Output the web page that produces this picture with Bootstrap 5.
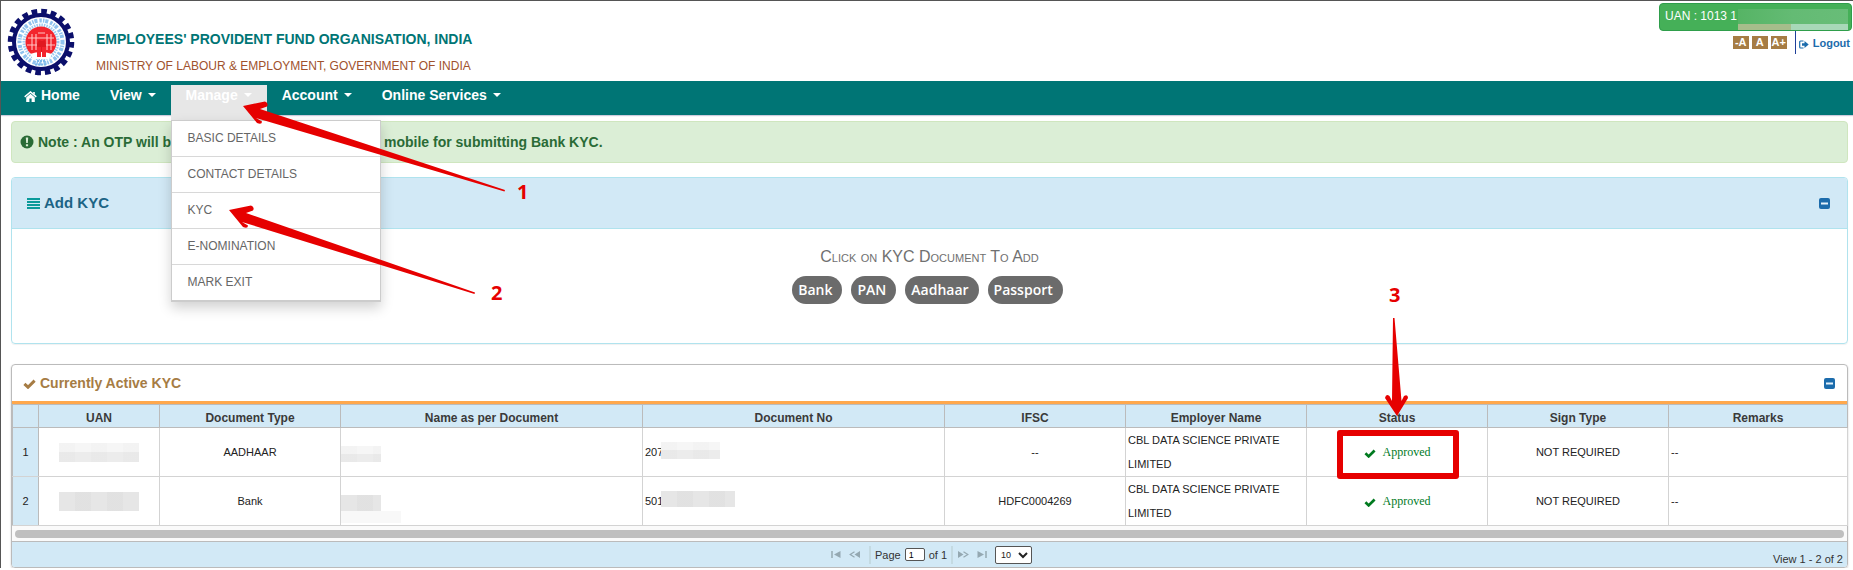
<!DOCTYPE html>
<html lang="en">
<head>
<meta charset="utf-8">
<meta name="viewport" content="width=device-width, initial-scale=1">
<title>EPFO - Add KYC</title>
<link href="https://cdn.jsdelivr.net/npm/bootstrap@5.3.0/dist/css/bootstrap.min.css" rel="stylesheet">
<style>
body{font-family:"Liberation Sans",Arial,sans-serif;font-size:14px;line-height:20px;color:#333;background:#fff;border-top:1px solid #555;border-left:1px solid #555;}
a{text-decoration:none;}
.site-head{height:80px;padding:2px 1px 0 6px;}
.site-head h1{font-size:14px;line-height:20px;font-weight:700;color:#007575;margin:26px 0 8px;}
.site-head h2{font-size:12px;line-height:18px;color:#a0522d;margin:0;font-weight:400;}
.head-text{padding-left:21px;}
.uan-badge{width:193px;height:28px;border:1px solid #2f9e4b;border-radius:4px;background:#45b058;color:#fff;font-size:12px;line-height:24px;padding:0 3px 0 5px;overflow:hidden;}
.uan-mask{width:110px;margin-top:5px;height:15px;background:linear-gradient(90deg,#56b465,#64bb74 50%,#68bd78);}
.uan-mask2{width:110px;height:6px;background:linear-gradient(90deg,#a6bd8b 0 48%,#a8d8b8 48%);}
.font-btns{gap:3px;margin-top:5px;}
.font-btn{border:0;background:#a67c44;color:#fff;font-size:11px;line-height:13px;font-weight:700;padding:0;width:16px;height:13px;}
.logout{border-left:1px solid #1e3f9a;height:23px;line-height:24px;font-size:11px;font-weight:700;color:#1c6cac;padding:0 2px 0 3px;margin-left:8px;}
.main-nav{--bs-navbar-nav-link-padding-x:15px;background:#007575;height:34px;padding:4px 0 0 8px;box-shadow:0 1px 1px #ccd;}
.main-nav .nav-link{color:#fff;font-weight:700;font-size:14px;line-height:20px;padding-top:0;padding-bottom:0;height:30px;}
.main-nav .dropdown-toggle::after{margin-left:6px;vertical-align:3px;border-top:4px solid;border-left:4px solid transparent;border-right:4px solid transparent;}
.main-nav .nav-link.active-link{background:#e7e7e7;height:35px;color:#fff;}
.main-nav .dropdown-menu{display:block;top:35px;left:0;width:210px;margin:0;padding:0;border:1px solid #ccc;border-bottom-width:2px;border-radius:0;box-shadow:0 6px 12px rgba(0,0,0,.18);}
.main-nav .dropdown-item{font-size:12px;line-height:35px;color:#666;padding:0 16px;border-bottom:1px solid #d8d8d8;}
.main-nav li:last-child>.dropdown-item{border-bottom:0;}
.marker{position:absolute;pointer-events:none;overflow:visible;z-index:1100;}
.marker text{font:700 20px "Open Sans","Noto Sans",sans-serif;fill:#e60000;}
.page-main{padding:6px 5px 0 10px;}
.note{background:#dbeed6;border:1px solid #cfe6bf;border-radius:4px;color:#2a6b36;font-weight:700;height:42px;padding:0 8px;margin-bottom:14px;}
.note-lead{width:346px;}
.panel-kyc{border:1px solid #b0e3ee;border-radius:4px;margin-bottom:20px;box-shadow:0 1px 1px rgba(0,0,0,.06);}
.panel-kyc-head{background:#d2e9f6;border-bottom:1px solid #b0e3ee;height:51px;padding:0 17px 0 15px;border-radius:3px 3px 0 0;}
.panel-kyc-head h3{font-size:15px;line-height:20px;font-weight:700;color:#1c6485;margin:0;}
.panel-kyc-body{height:114px;padding-top:18px;}
.pick-title{font-size:16px;line-height:20px;font-variant:small-caps;color:#707070;margin:0 0 9px;}
.pills{gap:9px;padding-right:4px;}
.pill{border:0;border-radius:14px;height:28px;background:#6b6b6b;color:#fff;font:600 14px/28px "Open Sans","Noto Sans",sans-serif;padding:0 10px 0 6px;}
.panel-list{border:1px solid #bbb;border-radius:4px;box-shadow:0 1px 2px rgba(0,0,0,.2);}
.panel-list-head{height:39px;border-bottom:3px solid #ffa84c;padding:0 12px 0 11px;}
.panel-list-head h3{font-size:14px;line-height:20px;font-weight:700;color:#a67c44;margin:0;}
.toggle{border:0;background:none;padding:0;line-height:0;}
.kyc-grid{table-layout:fixed;width:100%;margin:0;font-size:11px;line-height:24px;color:#222;border-left:1px solid #bbb;border-right:1px solid #bbb;}
.kyc-grid th{background:#d2e9f6;font-size:12px;line-height:14px;height:23px;padding:5px 0 2px;text-align:center;color:#3a3a3a;border:1px solid #bbb;border-left:0;}
.kyc-grid td{height:49px;padding:0 2px;vertical-align:middle;border-right:1px solid #d3d3d3;border-bottom:1px solid #d3d3d3;}
.kyc-grid td.rn{background:#d2e9f6;text-align:center;border-right-color:#bbb;padding:0;}
.status{font-family:"Liberation Serif","Times New Roman",serif;font-size:12px;color:#007a1f;}
.status svg{margin-right:7px;}
.mask{display:block;background:repeating-linear-gradient(90deg,rgba(0,0,0,.01) 0 16px,transparent 16px 32px),linear-gradient(#f6f6f6 0 48%,#ececec 48%);}
.mask-dark{background:repeating-linear-gradient(90deg,transparent 0 16px,rgba(0,0,0,.02) 16px 32px),#e6e6e6;}
.mask-faint{background:#f8f8f8;}
.w-uan{width:80px;height:19px;}
.w-name{width:40px;height:16px;}
.w-tail{width:60px;height:12px;}
.w-no{width:59px;height:17px;margin-left:-2px;}
.w-acc{width:74px;height:16px;margin-left:-2px;}
.frame{position:absolute;inset:2px auto auto 50%;width:122px;margin-left:-60px;height:49px;border:6px solid #e60000;border-radius:3px;}
.scroll-track{height:15px;background:#fafafa;padding:4px 3px;}
.scroll-thumb{height:8px;border-radius:4px;background:#bfbfbf;}
.pager{background:#d2e9f6;border-top:1px solid #bbb;height:26px;font-size:11px;line-height:14px;border-radius:0 0 3px 3px;padding:0 4px;}
.pager-col{flex:1 1 0;}
.pager .sep{width:2px;height:18px;background:#c4dae2;}
.pager input{width:20px;height:13px;border:1px solid #555;border-radius:2px;background:#fff;font-size:9px;line-height:11px;padding:0 3px;}
.pager select{width:37px;height:18px;border:1px solid #555;border-radius:2px;background:#fff;font-size:9px;padding:0 0 0 1px;color:#222;}
.pager button{border:0;background:none;padding:0;line-height:0;}
</style>
</head>
<body>
<svg class="d-none" aria-hidden="true">
  <symbol id="i-check" viewBox="0 0 13 10"><path d="M1.400 4.800 5 8.200 11.600 1.600" fill="none" stroke="currentColor" stroke-width="3"/></symbol>
  <symbol id="i-minus" viewBox="0 0 11 11"><rect width="11" height="11" rx="2" fill="#1c6cac"/><rect x="2" y="4.5" width="7" height="2" fill="#e4f2fb"/></symbol>
</svg>

<header class="site-head d-flex align-items-start">
  <svg class="flex-shrink-0 mt-1" width="68" height="70" viewBox="-34 -35 68 70" role="img" aria-label="EPFO">
    <circle r="30.5" fill="none" stroke="#0b0f6b" stroke-width="5.5" stroke-dasharray="5.6 3.98"/>
    <circle r="27" fill="#fff" stroke="#0b0f6b" stroke-width="4"/>
    <circle r="21.5" fill="none" stroke="#8fc2ee" stroke-width="4" stroke-dasharray="2.5 1.2 1.5 .8 3 2"/>
    <circle r="17" fill="none" stroke="#9dcbf0" stroke-width="3" stroke-dasharray="1.5 1"/>
    <circle r="15.5" fill="#f3242d"/>
    <path d="M-13-4H13M-14 3H14M-9-8V8M-5-8V8M6-8V8M10-8V8M-3-9H4" stroke="#ffc4c4" stroke-width="1.1" fill="none"/>
    <path d="M-4 14V2l2-4 3 1 3-1 1 5v11l-3-6z" fill="#e01820"/>
    <path d="M-11 12Q0 8 11 12L8 17H-8z" fill="#fff"/><path d="M-3 15V6h2v9M2 15V6h2v9" stroke="#f3242d" stroke-width="2"/>
    <path d="M-4 19H4M-6 22.500H6" stroke="#7ab8ea" stroke-width="2" stroke-dasharray="2 1"/>
  </svg>
  <div class="head-text flex-grow-1">
    <h1>EMPLOYEES' PROVIDENT FUND ORGANISATION, INDIA</h1>
    <h2>MINISTRY OF LABOUR &amp; EMPLOYMENT, GOVERNMENT OF INDIA</h2>
  </div>
  <div class="flex-shrink-0">
    <div class="uan-badge d-flex justify-content-between"><span class="text-nowrap">UAN : 1013 1</span><span class="flex-shrink-0"><span class="uan-mask d-block"></span><span class="uan-mask2 d-block"></span></span></div>
    <div class="d-flex justify-content-end">
      <div class="font-btns d-flex"><button class="font-btn" type="button">-A</button><button class="font-btn" type="button">A</button><button class="font-btn" type="button">A+</button></div>
      <a href="#" class="logout"><svg width="10" height="9" viewBox="0 0 10 9" class="me-1" aria-hidden="true"><path d="M4.500 1H1.500Q.7 1 .7 2v5q0 1 .8 1h3" fill="none" stroke="currentColor" stroke-width="1.2"/><path d="M3 3.200h2.500V1L9.700 4.500 5.500 8V5.800H3z" fill="currentColor"/></svg>Logout</a>
    </div>
  </div>
</header>

<nav class="main-nav navbar navbar-expand align-items-start">
  <ul class="navbar-nav">
    <li class="nav-item"><a class="nav-link" href="#"><svg width="13" height="11" viewBox="0 0 13 11" class="me-1" aria-hidden="true"><path d="M.7 5.900 6.500 1l5.800 4.900" fill="none" stroke="#fff" stroke-width="1.500"/><path d="M2.200 6.400 6.500 2.800l4.300 3.600V11H7.600V7.600H5.400V11H2.200zM9.200 1h1.600v2.800L9.200 2.500z" fill="#fff"/></svg>Home</a></li>
    <li class="nav-item"><a class="nav-link dropdown-toggle" href="#">View</a></li>
    <li class="nav-item dropdown position-relative">
      <a class="nav-link dropdown-toggle active-link" href="#" aria-expanded="true">Manage</a>
      <ul class="dropdown-menu show">
        <li><a class="dropdown-item" href="#">BASIC DETAILS</a></li>
        <li><a class="dropdown-item" href="#">CONTACT DETAILS</a></li>
        <li><a class="dropdown-item" href="#">KYC</a></li>
        <li><a class="dropdown-item" href="#">E-NOMINATION</a></li>
        <li><a class="dropdown-item" href="#">MARK EXIT</a></li>
      </ul>
      <svg class="marker top-0 start-0" width="370" height="220" viewBox="171 85 370 220">
        <g fill="#e60000">
          <path d="M243 106 265 101.500Q269 103 267 106.500L260 109 505 190 504.500 191.500 256 118 262 121.500Q262 125 257 123z"/>
          <path d="M229 210 251 205.500Q255 207 253 210.500L246 213 475 292.500 474.500 294 242 222 248 225.500Q248 229 243 227z"/>
        </g>
        <text x="517" y="199">1</text>
        <text x="491" y="300">2</text>
      </svg>
    </li>
    <li class="nav-item"><a class="nav-link dropdown-toggle" href="#">Account</a></li>
    <li class="nav-item"><a class="nav-link dropdown-toggle" href="#">Online Services</a></li>
  </ul>
</nav>

<main class="page-main">
  <div class="note d-flex align-items-center" role="alert">
    <svg width="14" height="14" viewBox="0 0 13 14" class="me-1" aria-hidden="true"><circle cx="6.500" cy="7" r="6.500" fill="#2a6b36"/><path d="M5.300 2.500h2.400L7.300 8H5.700zM5.400 9.200h2.200v2.100H5.400z" fill="#dbeed6"/></svg>
    <span class="note-lead">Note : An OTP will b</span><span>mobile for submitting Bank KYC.</span>
  </div>

  <section class="panel-kyc">
    <div class="panel-kyc-head d-flex align-items-center justify-content-between">
      <h3><svg width="13" height="12" viewBox="0 0 13 12" class="me-1" aria-hidden="true"><path d="M0 1H13M0 4H13M0 7H13M0 10H13" stroke="#0a9a9a" stroke-width="2"/></svg>Add KYC</h3>
      <button class="toggle" type="button" aria-label="Collapse"><svg width="11" height="11"><use href="#i-minus"/></svg></button>
    </div>
    <div class="panel-kyc-body text-center">
      <p class="pick-title">Click on KYC Document To Add</p>
      <div class="pills d-flex justify-content-center">
        <button class="pill" type="button">Bank</button>
        <button class="pill" type="button">PAN</button>
        <button class="pill" type="button">Aadhaar</button>
        <button class="pill" type="button">Passport</button>
      </div>
    </div>
  </section>

  <section class="panel-list">
    <div class="panel-list-head d-flex align-items-center justify-content-between">
      <h3><svg width="13" height="10" class="me-1" aria-hidden="true"><use href="#i-check"/></svg>Currently Active KYC</h3>
      <button class="toggle" type="button" aria-label="Collapse"><svg width="11" height="11"><use href="#i-minus"/></svg></button>
    </div>
    <table class="kyc-grid">
      <colgroup><col style="width:26px"><col style="width:121px"><col style="width:181px"><col style="width:302px"><col style="width:302px"><col style="width:181px"><col style="width:181px"><col style="width:181px"><col style="width:181px"><col style="width:179px"></colgroup>
      <thead><tr><th></th><th>UAN</th><th>Document Type</th><th>Name as per Document</th><th>Document No</th><th>IFSC</th><th>Employer Name</th><th>Status</th><th>Sign Type</th><th>Remarks</th></tr></thead>
      <tbody>
        <tr>
          <td class="rn">1</td>
          <td><span class="mask w-uan mx-auto"></span></td>
          <td class="text-center">AADHAAR</td>
          <td class="ps-0"><span class="mask w-name mt-1"></span></td>
          <td><div class="d-flex align-items-center">207<span class="mask w-no mb-1"></span></div></td>
          <td class="text-center">--</td>
          <td>CBL DATA SCIENCE PRIVATE LIMITED</td>
          <td class="text-center position-relative">
            <span class="status"><svg width="12" height="9" aria-hidden="true"><use href="#i-check"/></svg>Approved</span>
            <span class="frame"></span>
            <svg class="marker top-0 start-50" width="1" height="1" viewBox="0 0 1 1"><g transform="translate(-1397 -428)"><path fill="#e60000" d="M1393 318h1.500L1401.500 401 1404 396Q1408 394 1408 398L1397 416 1385 398Q1386 393 1389.500 396L1392 401z"/><text x="1389" y="302">3</text></g></svg>
          </td>
          <td class="text-center">NOT REQUIRED</td>
          <td>--</td>
        </tr>
        <tr>
          <td class="rn">2</td>
          <td><span class="mask mask-dark w-uan mx-auto"></span></td>
          <td class="text-center">Bank</td>
          <td class="ps-0"><span class="mask mask-dark w-name mt-3"></span><span class="mask mask-faint w-tail"></span></td>
          <td><div class="d-flex align-items-center">501<span class="mask mask-dark w-acc mb-1"></span></div></td>
          <td class="text-center">HDFC0004269</td>
          <td>CBL DATA SCIENCE PRIVATE LIMITED</td>
          <td class="text-center"><span class="status"><svg width="12" height="9" aria-hidden="true"><use href="#i-check"/></svg>Approved</span></td>
          <td class="text-center">NOT REQUIRED</td>
          <td>--</td>
        </tr>
      </tbody>
    </table>
    <div class="scroll-track"><div class="scroll-thumb"></div></div>
    <div class="pager d-flex align-items-center">
      <div class="pager-col"></div>
      <div class="d-flex align-items-center gap-1 ps-1">
        <button type="button" aria-label="First page" class="me-1"><svg width="10" height="7"><path d="M1 0V7" stroke="#94a8b1" stroke-width="1.500"/><path d="M9.500 0V7L3 3.500z" fill="#94a8b1"/></svg></button>
        <button type="button" aria-label="Previous page" class="me-1"><svg width="12" height="7"><path d="M5.500.8 1.200 3.500 5.500 6.200" fill="none" stroke="#94a8b1" stroke-width="1.200"/><path d="M11 0V7L5.500 3.500z" fill="#94a8b1"/></svg></button>
        <span class="sep"></span>
        <label for="pg">Page</label>
        <input id="pg" type="text" value="1">
        <span>of 1</span>
        <span class="sep"></span>
        <button type="button" aria-label="Next page"><svg width="12" height="7"><path d="M6.500.8 10.800 3.500 6.500 6.200" fill="none" stroke="#94a8b1" stroke-width="1.200"/><path d="M1 0V7L6.500 3.500z" fill="#94a8b1"/></svg></button>
        <button type="button" aria-label="Last page" class="mx-1"><svg width="10" height="7"><path d="M9 0V7" stroke="#94a8b1" stroke-width="1.500"/><path d="M.5 0V7L7 3.500z" fill="#94a8b1"/></svg></button>
        <select aria-label="Rows per page"><option>10</option><option>20</option><option>30</option></select>
      </div>
      <div class="pager-col text-end pt-2">View 1 - 2 of 2</div>
    </div>
  </section>
</main>
<script src="https://cdn.jsdelivr.net/npm/bootstrap@5.3.0/dist/js/bootstrap.bundle.min.js"></script>
</body>
</html>
